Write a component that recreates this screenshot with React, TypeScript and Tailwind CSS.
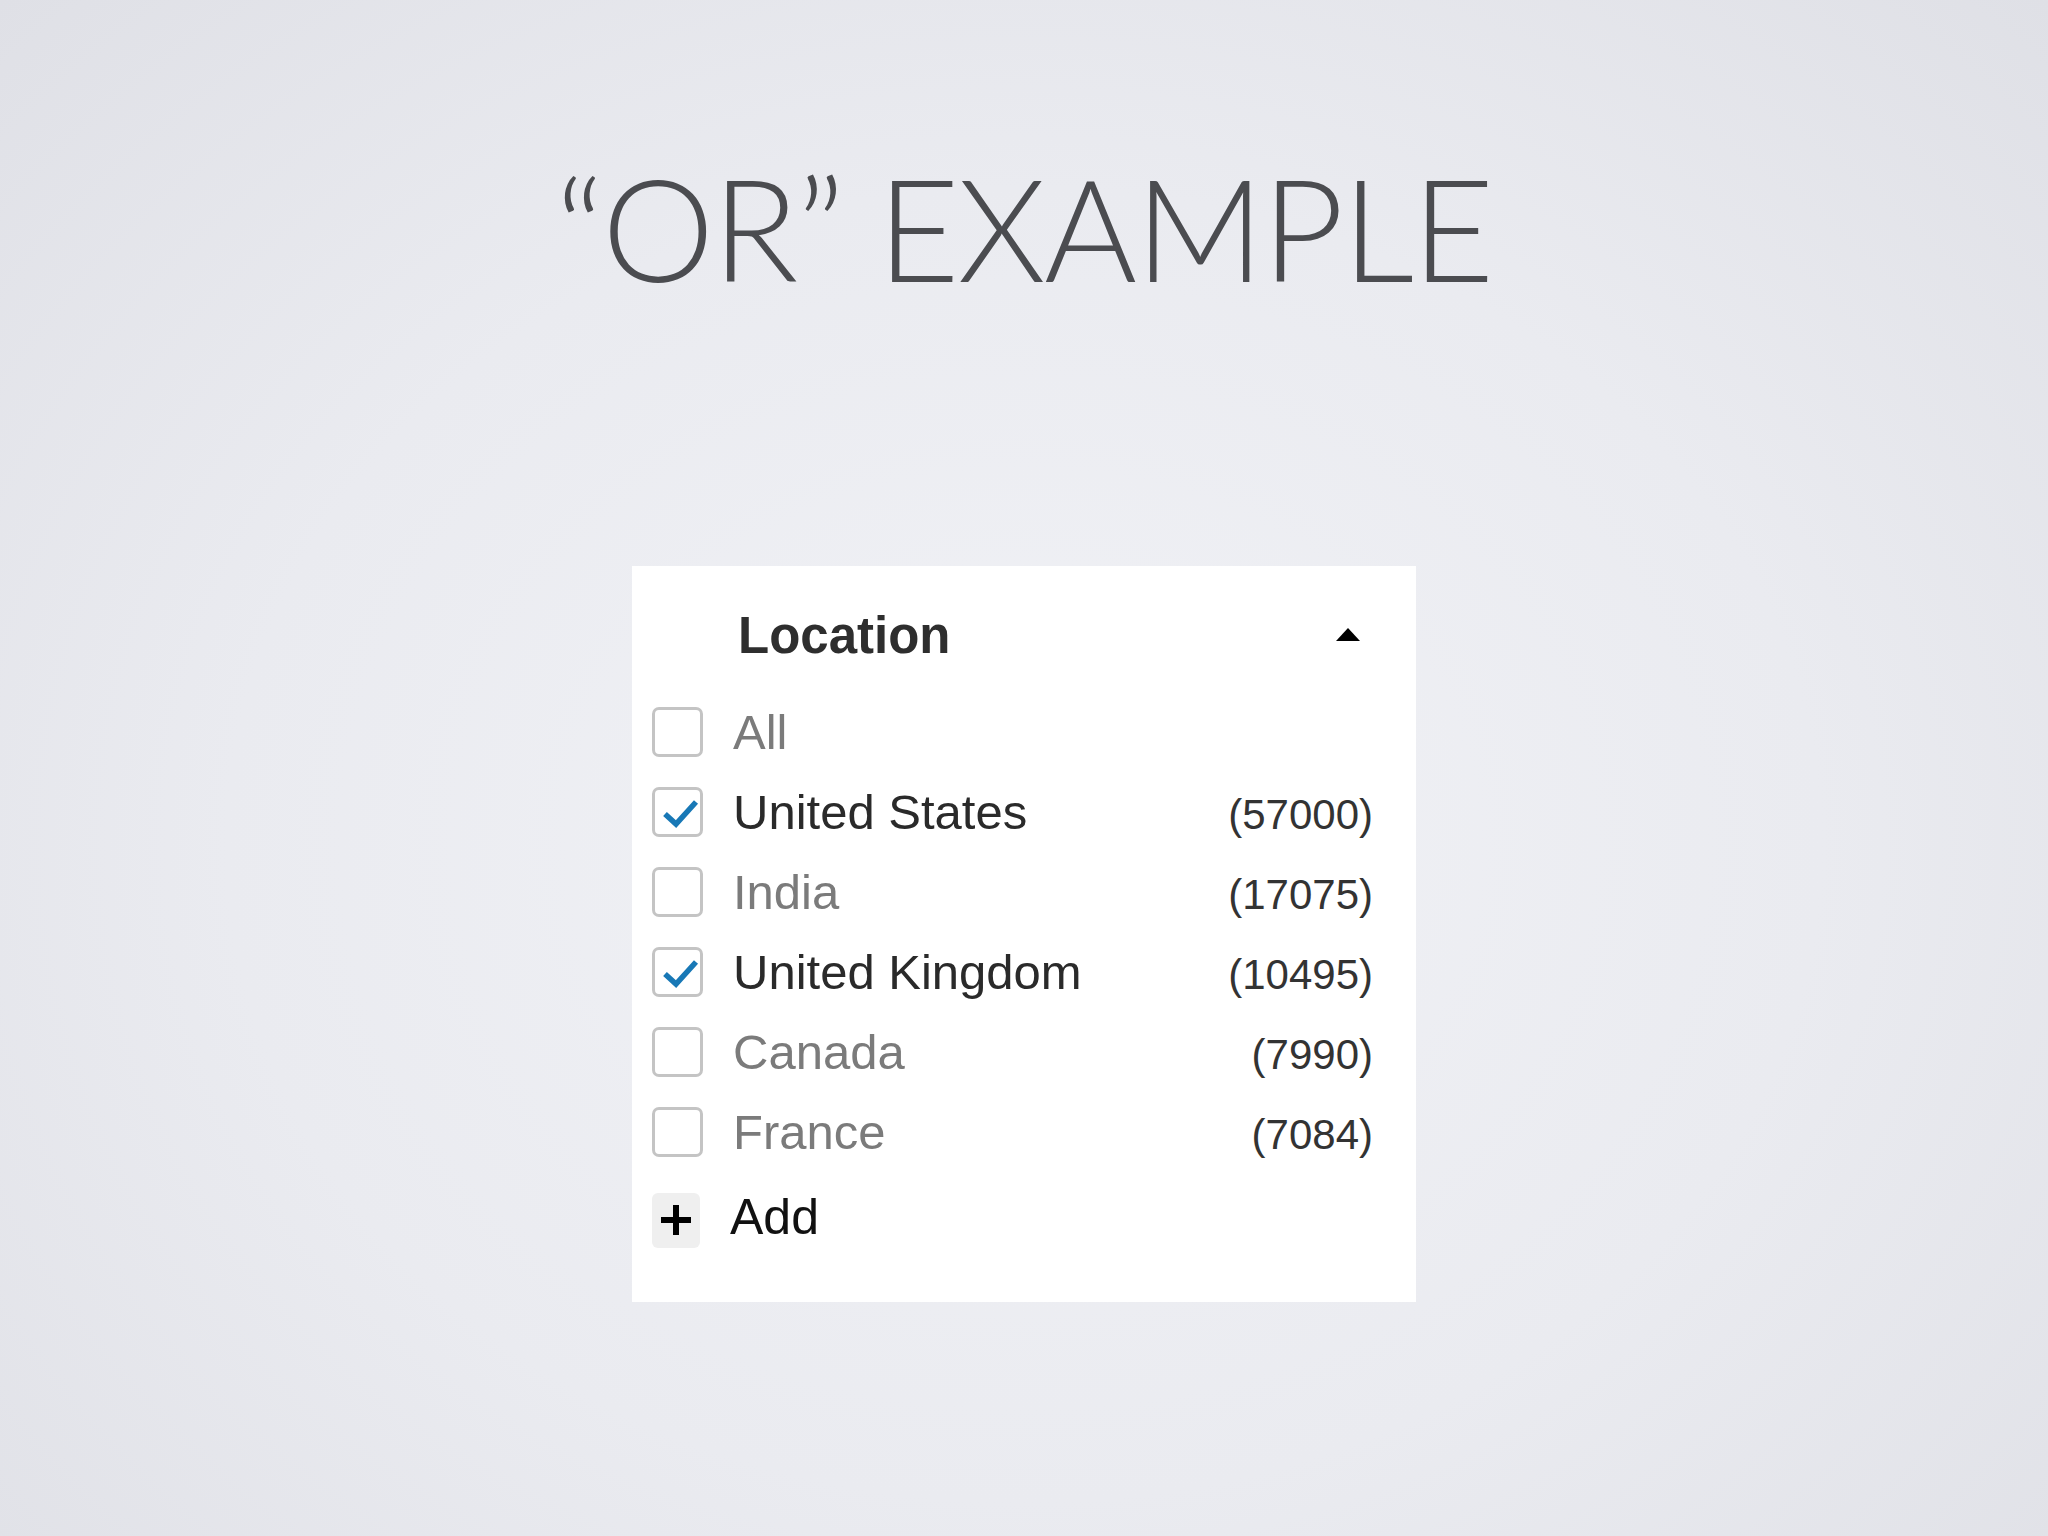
export default function App() {
  const rows = [
    { label: "All", checked: false, count: "" },
    { label: "United States", checked: true, count: "(57000)" },
    { label: "India", checked: false, count: "(17075)" },
    { label: "United Kingdom", checked: true, count: "(10495)" },
    { label: "Canada", checked: false, count: "(7990)" },
    { label: "France", checked: false, count: "(7084)" },
  ];
  const sans = { fontFamily: '"Liberation Sans", Arial, Helvetica, sans-serif' };
  return (
    <div className="w-[2048px] h-[1536px] flex flex-col items-center bg-[radial-gradient(ellipse_at_50%_55%,#f1f2f6_0%,#eaebf0_55%,#dfe0e6_100%)]">
      <h1
        className="mt-[156px] text-[142px] leading-none font-light tracking-[-2px] text-[#4b4c50] whitespace-nowrap"
        style={{ fontFamily: 'Lato, "Open Sans", sans-serif' }}
      >
        “OR” EXAMPLE
      </h1>
      <div className="mt-[268px] w-[784px] h-[736px] bg-white flex flex-col pl-[20px] pr-[43px]" style={sans}>
        <div className="mt-[44px] flex items-center justify-between pl-[86px] pr-[13px]">
          <span className="text-[51px] leading-none font-bold text-[#2e2e2e]">Location</span>
          <svg width="24" height="13" viewBox="0 0 24 13" className="mb-[2px]">
            <polygon points="12,0 24,13 0,13" fill="#000" />
          </svg>
        </div>
        <div className="mt-[31px] flex flex-col">
          {rows.map((r) => (
            <div key={r.label} className="h-[80px] flex items-center">
              <div className="w-[51px] h-[50px] rounded-[7px] border-[3px] border-[#c4c4c4] bg-white flex items-center justify-center shrink-0">
                {r.checked && (
                  <svg width="45" height="44" viewBox="0 0 45 44" className="-ml-[1px]">
                    <path d="M10 24 L21 34 L41 12" fill="none" stroke="#1878b6" strokeWidth="5.5" strokeLinecap="butt" strokeLinejoin="miter" />
                  </svg>
                )}
              </div>
              <div className="flex-1 flex items-baseline justify-between ml-[30px]">
                <span className={`text-[49px] leading-none ${r.checked ? "text-[#2a2a2a]" : "text-[#7b7b7b]"}`}>{r.label}</span>
                <span className="text-[42px] leading-none text-[#333333]">{r.count}</span>
              </div>
            </div>
          ))}
          <div className="h-[80px] mt-[8px] flex items-center">
            <div className="w-[48px] h-[55px] rounded-[6px] bg-[#efefef] flex items-center justify-center shrink-0">
              <svg width="34" height="34" viewBox="0 0 34 34">
                <path d="M2 17 H32 M17 2 V32" stroke="#000" strokeWidth="6" />
              </svg>
            </div>
            <span className="ml-[30px] mb-[6px] text-[50px] leading-none text-[#111111]">Add</span>
          </div>
        </div>
      </div>
    </div>
  );
}
